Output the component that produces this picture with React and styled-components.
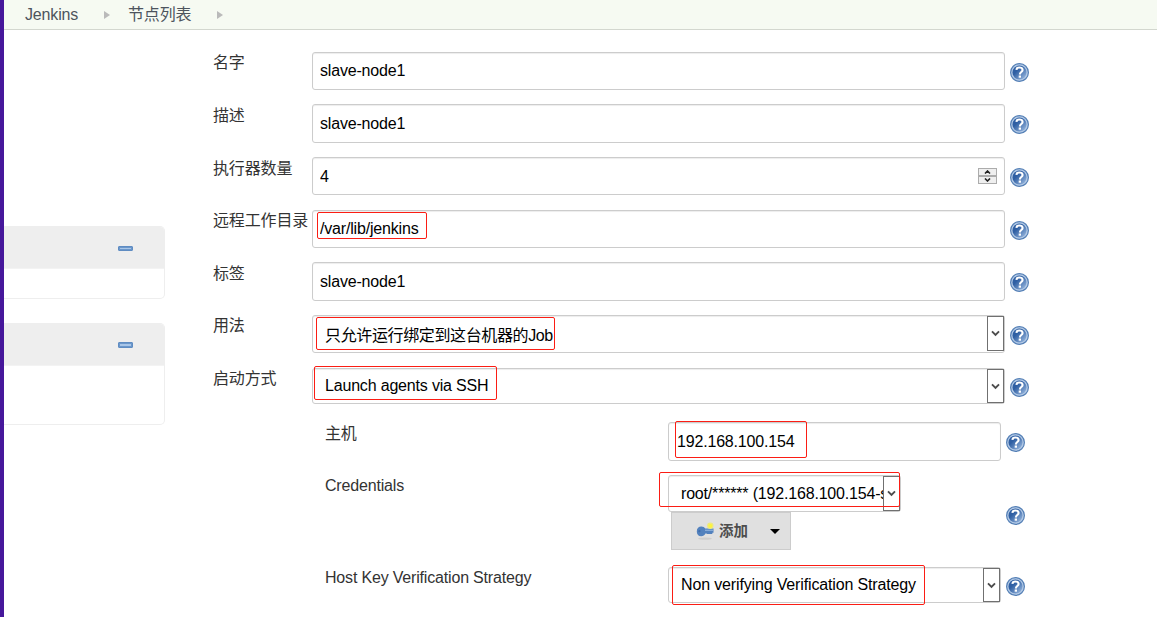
import React from "react";
import styled, { createGlobalStyle } from "styled-components";

const GlobalStyle = createGlobalStyle`
  * { box-sizing: border-box; }
  html, body { margin: 0; padding: 0; background: #fff; }
  body {
    overflow: hidden;
    font-family: "Liberation Sans", "Noto Sans CJK SC", sans-serif;
    font-size: 16px;
    color: #333;
  }
`;

const Page = styled.div`
  width: 1157px;
  height: 617px;
  display: flex;
  flex-direction: column;
  border-left: 4px solid #46179b;
  overflow: hidden;
`;

const Breadcrumbs = styled.nav`
  flex: none;
  height: 30px;
  display: flex;
  align-items: center;
  padding-left: 21px;
  background: #f6faf2;
  border-bottom: 1px solid #d3d7cf;
  color: #4d545d;
`;

const Crumb = styled.span`
  width: ${(p) => p.$width}px;
  line-height: 20px;
  white-space: nowrap;
  letter-spacing: -0.15px;
`;

const CrumbArrow = styled.i`
  margin: 0 ${(p) => p.$after || 0}px 0 ${(p) => p.$before}px;
  border-left: 6px solid #bababa;
  border-top: 4.5px solid transparent;
  border-bottom: 4.5px solid transparent;
`;

const Main = styled.div`
  flex: 1;
  min-height: 0;
  display: flex;
`;

const SidePanel = styled.aside`
  flex: none;
  width: 161px;
  padding-top: 196px;
  display: flex;
  flex-direction: column;
  gap: 24px;
`;

const Pane = styled.section`
  height: ${(p) => p.$height}px;
  border: 1px solid #eee;
  border-left: 0;
  border-radius: 0 5px 5px 0;
  overflow: hidden;
`;

const PaneHeader = styled.div`
  height: 42px;
  padding: 1px 31px 0 0;
  display: flex;
  align-items: center;
  justify-content: flex-end;
  background: #eee;
  border-bottom: 1px solid #f3f3f3;
`;

const Collapse = styled.span`
  width: 15px;
  height: ${(p) => p.$height}px;
  border: 1px solid #5f8cc2;
  border-radius: 1px;
  background: #a9c6e8;
  box-shadow: inset 0 0 0 1px #6b97cb;
`;

const Form = styled.main`
  margin-left: 48px;
  padding-top: 22px;
  width: 830px;
`;

const Row = styled.div`
  display: flex;
  align-items: flex-start;
  height: ${(p) => p.$height}px;
`;

const NestedRows = styled.div`
  padding-left: 112px;
`;

const Label = styled.label`
  flex: none;
  width: ${(p) => (p.$nested ? 343 : 99)}px;
  line-height: 20px;
  padding-top: ${(p) => p.$top || 0}px;
  white-space: nowrap;
  letter-spacing: ${(p) => p.$spacing ?? -0.15}px;
`;

const Controls = styled.div`
  flex: none;
  width: ${(p) => (p.$nested ? 333 : 693)}px;
`;

const Field = styled.div`
  position: relative;
  width: ${(p) => (p.$width ? `${p.$width}px` : "100%")};
  height: ${(p) => p.$height}px;
  display: flex;
  align-items: center;
  justify-content: space-between;
  padding-left: ${(p) => p.$pad || 7}px;
  border: 1px solid #ccc;
  border-radius: 3px;
  background: #fff;
  box-shadow: inset 0 1px 1px rgba(0, 0, 0, 0.075);
  color: #000;
`;

const Value = styled.span`
  flex: 1;
  min-width: 0;
  overflow: hidden;
  white-space: nowrap;
  line-height: 24px;
  padding-top: ${(p) => p.$drop || 0}px;
  letter-spacing: ${(p) => p.$spacing ?? -0.18}px;
`;

const DropButton = styled.span`
  flex: none;
  align-self: flex-start;
  width: 17px;
  height: ${(p) => p.$height}px;
  display: grid;
  place-items: center;
  border: 1px solid #707070;
  background: #fff;
`;

const Spinner = styled.span`
  flex: none;
  width: 19px;
  height: 16px;
  margin-right: 7px;
  display: grid;
  grid-template-rows: 8px 8px;
`;

const SpinStep = styled.span`
  display: grid;
  place-items: center;
  border: 1px solid #acacac;
  background: #efefef;
`;

const Highlight = styled.span`
  position: absolute;
  left: ${(p) => p.$x - 1}px;
  top: ${(p) => p.$y - 1}px;
  width: ${(p) => p.$w}px;
  height: ${(p) => p.$h}px;
  border: 1px solid #fb1d14;
  border-radius: 2px;
  pointer-events: none;
`;

const Help = styled.span`
  flex: none;
  margin: ${(p) => p.$top}px 0 0 5px;
  width: 19px;
  height: 19px;
  svg { display: block; }
`;

const AddButton = styled.button`
  width: 120px;
  height: 38px;
  margin: 0 0 0 3px;
  padding: 0 10px 0 24px;
  display: flex;
  align-items: center;
  border: 1px solid #ccc;
  background: #e0e0e0;
  font: bold 14.5px "Liberation Sans", "Noto Sans CJK SC", sans-serif;
  color: #4d4d4d;
`;

const AddText = styled.span`
  margin: 0 auto 0 5px;
  line-height: 20px;
`;

const MenuCaret = styled.i`
  border-top: 5px solid #000;
  border-left: 5px solid transparent;
  border-right: 5px solid transparent;
`;

function HelpIcon({ top }) {
  return (
    <Help $top={top}>
      <svg width="19" height="19" viewBox="0 0 19 19" fill="none">
        <defs>
          <linearGradient id="helpDisc" x1="0" y1="0" x2="1" y2="1">
            <stop offset="0.35" stopColor="#2f5fa3" />
            <stop offset="1" stopColor="#a3c0e4" />
          </linearGradient>
        </defs>
        <circle cx="9.5" cy="9.5" r="8.9" fill="#b4cae6" stroke="#5580b6" strokeWidth="1.2" />
        <circle cx="9.5" cy="9.5" r="7" fill="url(#helpDisc)" />
        <path d="M6.400 6.900C6.500 5.200 7.700 4.500 9.500 4.500c1.900 0 3.100.9 3.100 2.400 0 2.100-2.700 2.100-2.700 4.500" stroke="#fff" strokeWidth="2.100" />
        <path d="M8.700 12.500h2.300v2.200h-2.300z" fill="#fff" />
      </svg>
    </Help>
  );
}

function Chevron() {
  return (
    <svg width="9" height="7" viewBox="0 0 9 7" fill="none">
      <path d="M1 1.300l3.500 3.500L8 1.300" stroke="#4c4c4c" strokeWidth="1.900" />
    </svg>
  );
}

function KeyIcon() {
  return (
    <svg width="18" height="18" viewBox="0 0 18 18">
      <ellipse cx="9" cy="16.600" rx="7" ry="1.200" fill="#cdcdcd" />
      <path d="M5.300 4.600c2 0 3.200.9 3.900 1.900h8.300v4.300h-1.200v1.200h-5.500v-.5H9.400c-.8 1.700-2.200 2.700-4.200 2.700-2.700 0-4.400-2-4.400-4.800s1.900-4.800 4.500-4.800z" fill="#5281bd" />
      <path d="M9 8.300h8" stroke="#86abd8" strokeWidth="1.400" />
      <circle cx="3.400" cy="9.200" r="1.100" fill="#3f6dab" />
      <circle cx="14.300" cy="3.800" r="3.200" fill="#efe97c" />
      <circle cx="14.300" cy="3.800" r="1.900" fill="#fdf53a" />
    </svg>
  );
}

const textRows = [
  { label: "名字", value: "slave-node1", row: 52, height: 38, help: 11, top: 1 },
  { label: "描述", value: "slave-node1", row: 53, height: 39, help: 11, top: 2 },
  { label: "执行器数量", value: "4", row: 53, height: 38, help: 11, top: 2, drop: 2, spinner: true },
  { label: "远程工作目录", value: "/var/lib/jenkins", row: 52, height: 38, help: 11, top: 1, mark: { x: 5, y: 2, w: 110, h: 27 } },
  { label: "标签", value: "slave-node1", row: 53, height: 39, help: 11, top: 2 },
];

const selectRows = [
  { label: "用法", value: "只允许运行绑定到这台机器的Job", row: 53, height: 38, button: 35, help: 11, top: 1, drop: 4, spacing: -0.37, mark: { x: 4, y: 2, w: 239, h: 33 } },
  { label: "启动方式", value: "Launch agents via SSH", row: 54, height: 36, button: 34, help: 10, top: 1, mark: { x: 2, y: -2, w: 183, h: 34 } },
];

const Mark = ({ x, y, w, h }) => <Highlight $x={x} $y={y} $w={w} $h={h} />;

export default function App() {
  return (
    <>
      <GlobalStyle />
      <Page>
        <Breadcrumbs>
          <Crumb $width={53}>Jenkins</Crumb>
          <CrumbArrow $before={26} $after={18} />
          <Crumb $width={64}>节点列表</Crumb>
          <CrumbArrow $before={25} />
        </Breadcrumbs>
        <Main>
          <SidePanel>
            <Pane $height={73}><PaneHeader><Collapse $height={5} /></PaneHeader></Pane>
            <Pane $height={102}><PaneHeader><Collapse $height={6} /></PaneHeader></Pane>
          </SidePanel>
          <Form>
            {textRows.map((r) => (
              <Row key={r.label} $height={r.row}>
                <Label $top={r.top}>{r.label}</Label>
                <Controls>
                  <Field $height={r.height}>
                    <Value $drop={r.drop}>{r.value}</Value>
                    {r.spinner && (
                      <Spinner>
                        <SpinStep><svg width="7" height="4" viewBox="0 0 7 4" fill="none"><path d="M1 3.500L3.500 1 6 3.500" stroke="#222" strokeWidth="1.600" /></svg></SpinStep>
                        <SpinStep><svg width="7" height="4" viewBox="0 0 7 4" fill="none"><path d="M1 .5L3.500 3 6 .5" stroke="#222" strokeWidth="1.600" /></svg></SpinStep>
                      </Spinner>
                    )}
                    {r.mark && <Mark {...r.mark} />}
                  </Field>
                </Controls>
                <HelpIcon top={r.help} />
              </Row>
            ))}
            {selectRows.map((r) => (
              <Row key={r.label} $height={r.row}>
                <Label $top={r.top}>{r.label}</Label>
                <Controls>
                  <Field $height={r.height} $pad={12}>
                    <Value $drop={r.drop} $spacing={r.spacing}>{r.value}</Value>
                    <DropButton $height={r.button}><Chevron /></DropButton>
                    <Mark {...r.mark} />
                  </Field>
                </Controls>
                <HelpIcon top={r.help} />
              </Row>
            ))}
            <NestedRows>
              <Row $height={53}>
                <Label $nested $top={2}>主机</Label>
                <Controls $nested>
                  <Field $height={39} $pad={8}>
                    <Value>192.168.100.154</Value>
                    <Mark x={7} y={-1} w={132} h={37} />
                  </Field>
                </Controls>
                <HelpIcon top={11} />
              </Row>
              <Row $height={92}>
                <Label $nested $top={1} $spacing={-0.18}>Credentials</Label>
                <Controls $nested>
                  <Field $width={233} $height={37} $pad={12}>
                    <Value>root/****** (192.168.100.154-slave)</Value>
                    <DropButton $height={35}><Chevron /></DropButton>
                    <Mark x={-9} y={-3} w={241} h={35} />
                  </Field>
                  <AddButton>
                    <KeyIcon />
                    <AddText>添加</AddText>
                    <MenuCaret />
                  </AddButton>
                </Controls>
                <HelpIcon top={31} />
              </Row>
              <Row $height={50}>
                <Label $nested $top={1} $spacing={-0.18}>Host Key Verification Strategy</Label>
                <Controls $nested>
                  <Field $height={36} $pad={12}>
                    <Value $spacing={-0.15}>Non verifying Verification Strategy</Value>
                    <DropButton $height={34}><Chevron /></DropButton>
                    <Mark x={4} y={-2} w={253} h={40} />
                  </Field>
                </Controls>
                <HelpIcon top={10} />
              </Row>
            </NestedRows>
          </Form>
        </Main>
      </Page>
    </>
  );
}
